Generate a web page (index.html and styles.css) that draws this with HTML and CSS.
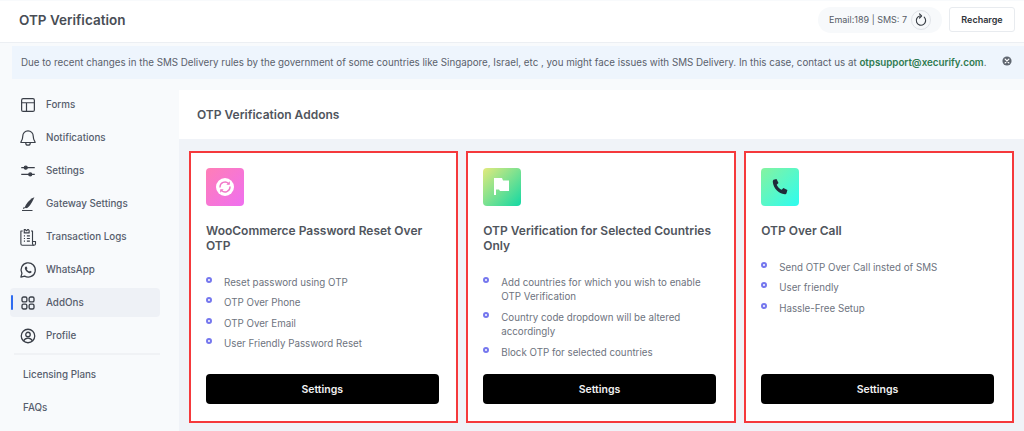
FILE: index.html
```html
<!DOCTYPE html>
<html lang="en">
<head>
<meta charset="utf-8">
<title>OTP Verification</title>
<link rel="stylesheet" href="styles.css">
</head>
<body>
<header class="topbar">
  <h1 class="page-title">OTP Verification</h1>
  <div class="top-actions">
    <div class="balance">
      <span>Email:189 | SMS: 7</span>
      <span class="refresh">
        <svg viewBox="0 0 24 24" width="14" height="14" fill="none" stroke="#3a3f46" stroke-width="2" stroke-linecap="round" stroke-linejoin="round"><path d="M17.500 7.200A8 8 0 1 1 10 5.200"/><path d="M9.500 1.500l3.500 3.600-3.500 3.500"/></svg>
      </span>
    </div>
    <button class="recharge">Recharge</button>
  </div>
</header>
<div class="notice">
  <p class="notice-text">Due to recent changes in the SMS Delivery rules by the government of some countries like Singapore, Israel, etc , you might face issues with SMS Delivery. In this case, contact us at <b class="notice-link">otpsupport@xecurify.com</b>.</p>
  <svg class="notice-close" viewBox="0 0 12 12" width="10" height="10"><circle cx="6" cy="6" r="5.500" fill="#5f6670"/><path d="M3.800 3.800l4.400 4.400M8.200 3.800L3.800 8.200" stroke="#fff" stroke-width="1.500" stroke-linecap="round"/></svg>
</div>
<div class="layout">
  <nav class="sidebar">
    <a class="nav-item">
      <svg viewBox="0 0 24 24" fill="none" stroke="#3a3f48" stroke-width="1.600"><rect x="3.500" y="3.500" width="17" height="17" rx="2"/><path d="M3.500 9h17M10 9v11.500"/></svg>
      Forms</a>
    <a class="nav-item">
      <svg viewBox="0 0 24 24" fill="none" stroke="#3a3f48" stroke-width="1.600" stroke-linejoin="round" stroke-linecap="round"><path d="M12 2.500a7 7 0 0 0-7 7c0 5-2.500 7-2.500 8.500h19c0-1.500-2.500-3.500-2.500-8.500a7 7 0 0 0-7-7z"/><path d="M9 18.500a3 3 0 0 0 6 0"/></svg>
      Notifications</a>
    <a class="nav-item">
      <svg viewBox="0 0 24 24" fill="none" stroke="#3a3f48" stroke-width="1.600"><path d="M3 7.500h18M3 16.500h18"/><circle cx="9" cy="7.500" r="2" fill="#3a3f48"/><circle cx="15" cy="16.500" r="2" fill="#3a3f48"/></svg>
      Settings</a>
    <a class="nav-item">
      <svg viewBox="0 0 24 24" fill="#3a3f48"><path d="M20.500 3c-4 1.500-8 5-11 9.500-1 1.500-1.700 3-1.900 4.300l1.700 1c2-.5 3.300-1.500 4.500-3C16 12 19 7 20.500 3z"/><path d="M6.500 15.500l-1.500 3.500 3.200-1.800z"/><rect x="4" y="20" width="14" height="1.300"/></svg>
      Gateway Settings</a>
    <a class="nav-item">
      <svg viewBox="0 0 24 24" fill="none" stroke="#3a3f48" stroke-width="1.500" stroke-linejoin="round"><path d="M5 4H2.500v17a2 2 0 0 0 2 2h15.500a2 2 0 0 0 2-2v-3h-4V4h-2"/><path d="M18 18v3a2 2 0 0 0 2 2"/><path d="M7 2h1.500l1 1.500h1L11.500 2h1l1 1.500V6.500H7z"/><path d="M6.500 10.500h1.500M10.500 10.500h4M6.500 14h1.500M10.500 14h4M6.500 17.500h1.500M10.500 17.500h4"/></svg>
      Transaction Logs</a>
    <a class="nav-item">
      <svg viewBox="0 0 24 24" fill="none" stroke="#3a3f48" stroke-width="1.700" stroke-linejoin="round"><path d="M2.500 21.500l1.400-5A9.500 9.500 0 1 1 7.500 20.200z"/><path d="M8.500 7.500c-1 1-1 2.800.3 4.700 1.500 2.300 3.700 3.900 5.700 4 1.200 0 2.200-.6 2.500-1.800l-2.300-1.400-1.200 1c-1.300-.5-2.600-1.800-3.200-3.200l1-1.200-1.300-2.300z" fill="#3a3f48" stroke="none"/></svg>
      WhatsApp</a>
    <a class="nav-item is-active">
      <svg viewBox="0 0 24 24" fill="none" stroke="#3a3f48" stroke-width="1.800"><rect x="4" y="4" width="6.500" height="6.500" rx="2"/><rect x="13.500" y="4" width="6.500" height="6.500" rx="2"/><rect x="4" y="13.500" width="6.500" height="6.500" rx="2"/><rect x="13.500" y="13.500" width="6.500" height="6.500" rx="2"/></svg>
      AddOns</a>
    <a class="nav-item">
      <svg viewBox="0 0 24 24" fill="none" stroke="#3a3f48" stroke-width="1.700"><circle cx="12" cy="12" r="9"/><circle cx="12" cy="10" r="3"/><path d="M6 18.500c1.500-2.800 3.500-3.800 6-3.800s4.500 1 6 3.800"/></svg>
      Profile</a>
    <div class="nav-divider"></div>
    <a class="nav-link">Licensing Plans</a>
    <a class="nav-link">FAQs</a>
  </nav>
  <main class="content">
    <div class="content-head">OTP Verification Addons</div>
    <section class="cards">
      <article class="card">
        <div class="card-icon icon-pink">
          <svg viewBox="0 0 20 20" width="20" height="20"><circle cx="10" cy="10" r="9" fill="#fff"/><g fill="none" stroke="#f177c8" stroke-width="1.400" stroke-linecap="round"><path d="M5 10A5 5 0 0 1 13.500 6.500"/><path d="M15 10A5 5 0 0 1 6.500 13.500"/></g><path d="M14.800 4.300v3.500h-3.500z" fill="#f177c8"/><path d="M5.200 15.700v-3.500h3.500z" fill="#f177c8"/></svg>
        </div>
        <h2 class="card-title">WooCommerce Password Reset Over OTP</h2>
        <ul class="features">
          <li>Reset password using OTP</li>
          <li>OTP Over Phone</li>
          <li>OTP Over Email</li>
          <li>User Friendly Password Reset</li>
        </ul>
        <button class="card-btn">Settings</button>
      </article>
      <article class="card">
        <div class="card-icon icon-green">
          <svg viewBox="0 0 20 20" width="20" height="20"><path d="M2 1h8l1 2.500h6V14H8l-1-1.500H4V18H2z" fill="#fff"/></svg>
        </div>
        <h2 class="card-title">OTP Verification for Selected Countries Only</h2>
        <ul class="features">
          <li>Add countries for which you wish to enable OTP Verification</li>
          <li>Country code dropdown will be altered accordingly</li>
          <li>Block OTP for selected countries</li>
        </ul>
        <button class="card-btn">Settings</button>
      </article>
      <article class="card">
        <div class="card-icon icon-cyan">
          <svg viewBox="0 0 20 20" width="20" height="20"><path d="M3.500 2.800l3-.8 2 4-1.800 1.700c.9 2.200 2.800 4.100 5 5l1.700-1.800 4 2-.8 3c-.2.900-1 1.400-1.900 1.300C8.600 16.600 3.400 11.400 2.800 5c-.1-.9.300-1.800.7-2.200z" fill="#1f2a3a"/></svg>
        </div>
        <h2 class="card-title">OTP Over Call</h2>
        <ul class="features">
          <li>Send OTP Over Call insted of SMS</li>
          <li>User friendly</li>
          <li>Hassle-Free Setup</li>
        </ul>
        <button class="card-btn">Settings</button>
      </article>
    </section>
  </main>
</div>
</body>
</html>
```

FILE: styles.css
```css
* { box-sizing: border-box; }
html, body { margin: 0; height: 431px; overflow: hidden; }
body {
  font-family: Inter, "Liberation Sans", sans-serif;
  background: #f8fafc;
  color: #4a4f58;
  display: flex;
  flex-direction: column;
  padding-top: 1px;
}
.topbar {
  height: 42px;
  flex: none;
  background: #fff;
  border-bottom: 1px solid #eceff3;
  display: flex;
  align-items: center;
  justify-content: space-between;
  padding: 0 9px 4px 19px;
}
.page-title { margin: 0; font-size: 13.500px; font-weight: 600; color: #484d55; }
.top-actions { display: flex; align-items: center; gap: 7px; }
.balance {
  width: 124px;
  height: 26px;
  background: #f7f9fb;
  border-radius: 13px;
  display: flex;
  align-items: center;
  gap: 4px;
  padding-left: 11px;
  font-size: 9px;
  color: #565c66;
  white-space: nowrap;
}
.refresh {
  width: 20px;
  height: 20px;
  border-radius: 50%;
  border: 1px solid #e0e3e8;
  display: flex;
  align-items: center;
  justify-content: center;
}
.recharge {
  width: 66px;
  height: 25px;
  background: #fff;
  border: 1px solid #e8ebef;
  border-radius: 3px;
  font: 600 9px Inter, sans-serif;
  color: #30343a;
}
.notice {
  height: 33px;
  flex: none;
  margin: 3px 0 0 12px;
  background: #eef5fd;
  display: flex;
  align-items: center;
  justify-content: space-between;
  padding: 0 12px 0 9px;
}
.notice-text { margin: 0; font-size: 9.770px; color: #5a616c; white-space: nowrap; }
.notice-link { font-weight: 600; color: #2f7a50; }
.notice-close { margin-top: -4px; }
.layout { flex: 1; display: flex; margin-top: 11px; min-height: 0; }
.sidebar { width: 179px; flex: none; padding: 0 19px 0 10px; }
.nav-item {
  height: 29px;
  margin-bottom: 4px;
  display: flex;
  align-items: center;
  padding-left: 10px;
  gap: 9px;
  font-size: 9.800px;
  font-weight: 500;
  color: #565d6c;
  border-radius: 4px;
  position: relative;
}
.nav-item svg { width: 18px; height: 18px; margin-left: -1px; flex: none; }
.nav-item.is-active { background: #eef1f6; }
.nav-item.is-active::before {
  content: "";
  position: absolute;
  left: 1px;
  top: 7px;
  width: 2px;
  height: 15px;
  background: #2e6bf0;
  border-radius: 1px;
}
.nav-divider { height: 2px; background: #f0f2f5; margin: -1px 0 0 4px; }
.nav-link {
  display: block;
  font-size: 9.800px;
  font-weight: 500;
  color: #565d6c;
  padding-left: 13px;
  line-height: 13px;
  margin-top: 13px;
  margin-bottom: 20px;
}
.content { flex: 1; background: #f0f3f8; min-width: 0; }
.content-head {
  height: 49px;
  background: #fff;
  display: flex;
  align-items: center;
  padding-left: 18px;
  font-size: 12px;
  font-weight: 600;
  color: #50555d;
}
.cards {
  display: grid;
  grid-template-columns: 269.250px 270px 270px;
  gap: 8px;
  padding: 12px 0 0 10px;
}
.card {
  height: 272px;
  background: #fff;
  border: 2px solid #f5393c;
  padding: 15px 19px 17px 15px;
  display: flex;
  flex-direction: column;
}
.card-icon {
  width: 38px;
  height: 38px;
  border-radius: 4px;
  display: flex;
  align-items: center;
  justify-content: center;
  flex: none;
}
.icon-pink { background: linear-gradient(135deg, #ff7eb6, #ef6ff0); }
.icon-green { background: linear-gradient(135deg, #e3ea7c, #12d8a4); }
.icon-cyan { background: linear-gradient(135deg, #85f39f, #2dfcf0); }
.card-title {
  margin: 17px 0 0;
  font-size: 12px;
  line-height: 15px;
  font-weight: 600;
  color: #50555d;
}
.features {
  list-style: none;
  margin: 22.500px 0 0;
  padding: 0;
  font-size: 9.750px;
  line-height: 14.500px;
  color: #6d737e;
}
.features li {
  position: relative;
  padding-left: 18px;
  margin-bottom: 6px;
}
.features li::before {
  content: "";
  position: absolute;
  left: 0;
  top: 1px;
  width: 2px;
  height: 2px;
  border: 2px solid #7577ee;
  border-radius: 50%;
}
.card-btn {
  margin-top: auto;
  height: 30px;
  width: 232.500px;
  flex: none;
  background: #000;
  color: #f0f0f0;
  border: none;
  border-radius: 4px;
  font: 600 10.500px Inter, sans-serif;
}
```
